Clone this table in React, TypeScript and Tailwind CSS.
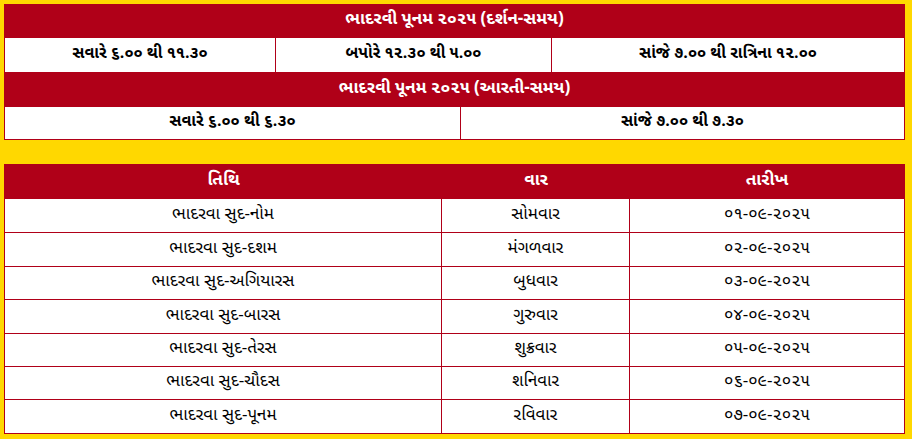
import React from 'react';

const RED = 'bg-[#b00018]';

const rows = [
  ['ભાદરવા સુદ-નોમ', 'સોમવાર', '૦૧-૦૯-૨૦૨૫'],
  ['ભાદરવા સુદ-દશમ', 'મંગળવાર', '૦૨-૦૯-૨૦૨૫'],
  ['ભાદરવા સુદ-અગિયારસ', 'બુધવાર', '૦૩-૦૯-૨૦૨૫'],
  ['ભાદરવા સુદ-બારસ', 'ગુરુવાર', '૦૪-૦૯-૨૦૨૫'],
  ['ભાદરવા સુદ-તેરસ', 'શુક્રવાર', '૦૫-૦૯-૨૦૨૫'],
  ['ભાદરવા સુદ-ચૌદસ', 'શનિવાર', '૦૬-૦૯-૨૦૨૫'],
  ['ભાદરવા સુદ-પૂનમ', 'રવિવાર', '૦૭-૦૯-૨૦૨૫'],
];

const font = { fontFamily: '"Noto Sans Gujarati", "Lohit Gujarati", "Shruti", "Noto Sans", sans-serif' };

export default function App() {
  return (
    <div className="w-[912px] h-[439px] bg-[#ffd800] pl-[4px] pt-[4px]" style={font}>
      {/* દર્શન / આરતી સમય */}
      <div className="w-[901px] border-x border-b border-[#b00018] bg-white">
        <div className={`${RED} h-[34px] flex items-center justify-center text-white font-bold text-[17px]`}>
          ભાદરવી પૂનમ ૨૦૨૫ (દર્શન-સમય)
        </div>
        <div className="h-[34px] grid grid-cols-[271px_276px_1fr] text-[16px] font-bold text-black">
          <div className="flex items-center justify-center border-r border-[#b00018]">સવારે ૬.૦૦ થી ૧૧.૩૦</div>
          <div className="flex items-center justify-center border-r border-[#b00018]">બપોરે ૧૨.૩૦ થી ૫.૦૦</div>
          <div className="flex items-center justify-center">સાંજે ૭.૦૦ થી રાત્રિના ૧૨.૦૦</div>
        </div>
        <div className={`${RED} h-[35px] flex items-center justify-center text-white font-bold text-[17px]`}>
          ભાદરવી પૂનમ ૨૦૨૫ (આરતી-સમય)
        </div>
        <div className="h-[32px] grid grid-cols-[456px_1fr] text-[16px] font-bold text-black">
          <div className="flex items-center justify-center border-r border-[#b00018]">સવારે ૬.૦૦ થી ૬.૩૦</div>
          <div className="flex items-center justify-center">સાંજે ૭.૦૦ થી ૭.૩૦</div>
        </div>
      </div>

      {/* તિથિ / વાર / તારીખ */}
      <div className="w-[901px] mt-[24px] border-x border-b border-[#b00018] bg-white">
        <div className={`${RED} h-[35px] grid grid-cols-[437px_188px_1fr] text-white font-bold text-[17px]`}>
          <div className="flex items-center justify-center">તિથિ</div>
          <div className="flex items-center justify-center">વાર</div>
          <div className="flex items-center justify-center">તારીખ</div>
        </div>
        {rows.map((r, i) => (
          <div
            key={i}
            className={`h-[33.4px] grid grid-cols-[437px_188px_1fr] text-[17px] text-black ${i > 0 ? 'border-t border-[#b00018]' : ''}`}
          >
            <div className="flex items-center justify-center border-r border-[#b00018]">{r[0]}</div>
            <div className="flex items-center justify-center border-r border-[#b00018]">{r[1]}</div>
            <div className="flex items-center justify-center">{r[2]}</div>
          </div>
        ))}
      </div>
    </div>
  );
}
